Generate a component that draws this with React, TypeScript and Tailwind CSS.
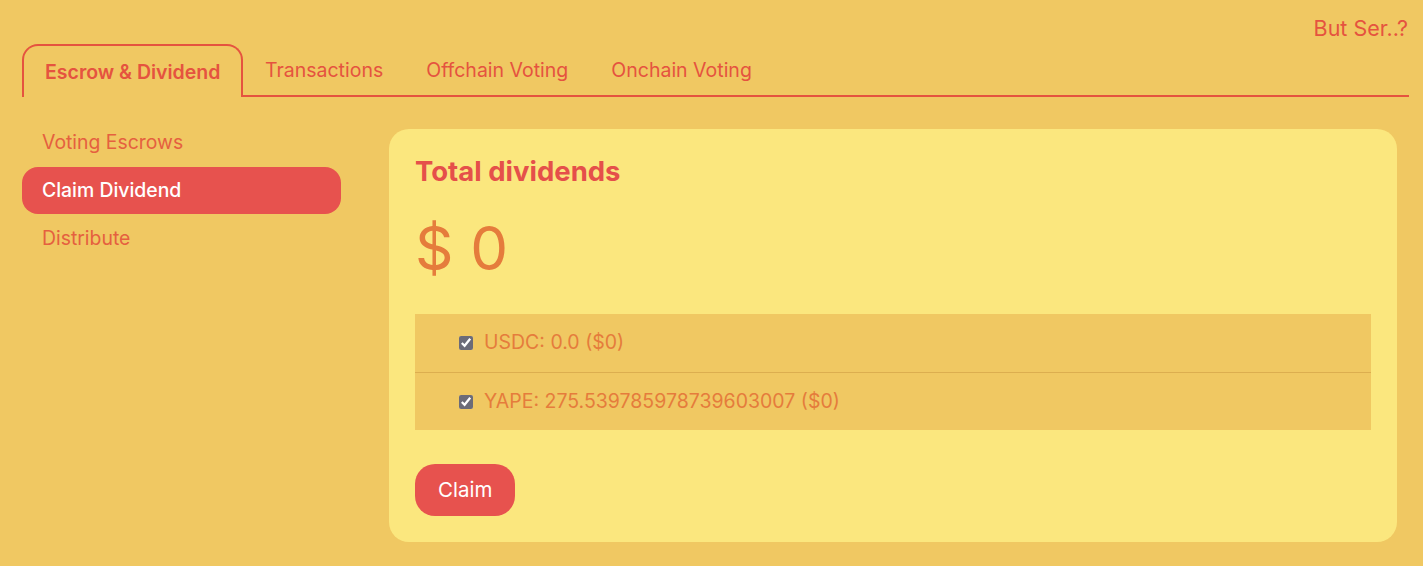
import { useState } from 'react';

const tabs = ['Escrow & Dividend', 'Transactions', 'Offchain Voting', 'Onchain Voting'];
const sideItems = ['Voting Escrows', 'Claim Dividend', 'Distribute'];

function App() {
  const [tab] = useState(0);
  const [side] = useState(1);
  const [checked, setChecked] = useState([true, true]);

  const rows = ['USDC: 0.0 ($0)', 'YAPE: 275.539785978739603007 ($0)'];

  return (
    <div
      className="min-h-screen bg-[#f0c862] text-[#e5533f]"
      style={{ fontFamily: 'Inter, "Liberation Sans", sans-serif' }}
    >
      <div className="px-[14px] pt-[15px]">
        <div className="flex justify-end text-[21.5px] leading-[26px] pr-[1px]">But Ser..?</div>
        <div className="flex items-end ml-[8px] h-[56px]">
          {tabs.map((t, i) =>
            i === tab ? (
              <div
                key={t}
                className="h-[53px] px-[21px] pt-[2px] flex items-center border-2 border-b-0 border-[#e5533f] rounded-t-[16px] text-[19.5px] font-semibold"
              >
                {t}
              </div>
            ) : (
              <div key={t} className="h-[53px] px-[21.5px] pt-[2px] flex items-center text-[19.5px] border-b-2 border-[#e5533f]">
                {t}
              </div>
            )
          )}
          <div className="flex-1 border-b-2 border-[#e5533f]" />
        </div>
      </div>

      <div className="flex px-[22px] pt-[32px] pb-[24px] gap-[48px]">
        <div className="w-[319px] flex flex-col gap-[1px] -mt-[10px]">
          {sideItems.map((s, i) => (
            <div
              key={s}
              className={
                i === side
                  ? 'h-[47px] flex items-center px-[20px] rounded-[16px] bg-[#e7524e] text-white text-[19.4px] font-medium'
                  : 'h-[47px] flex items-center px-[20px] text-[19.4px] text-[#e5603f]'
              }
            >
              {s}
            </div>
          ))}
        </div>

        <div className="flex-1 bg-[#fbe77e] rounded-[20px] px-[26px] pt-[25px] pb-[26px] mr-[4px]">
          <h2 className="text-[27.5px] font-bold leading-[34px] text-[#e5504a]">Total dividends</h2>
          <div className="text-[60px] leading-[72px] text-[#e57c3c] mt-[24px]">$ 0</div>
          <div className="mt-[30px] bg-[#f0c862]">
            {rows.map((r, i) => (
              <label
                key={r}
                className={
                  'h-[58px] flex items-center pl-[44px] gap-[11px] text-[19.5px] text-[#e57c3c] ' +
                  (i > 0 ? 'border-t border-[#dcae4f]' : '')
                }
              >
                <input
                  type="checkbox"
                  checked={checked[i]}
                  onChange={() => setChecked(checked.map((c, j) => (j === i ? !c : c)))}
                  className="w-[14px] h-[14px] accent-[#6b6b78]"
                />
                {r}
              </label>
            ))}
          </div>
          <button className="mt-[34px] h-[52px] px-[23px] rounded-[20px] bg-[#e7524e] text-white text-[20.5px]">
            Claim
          </button>
        </div>
      </div>
    </div>
  );
}

export default App;
